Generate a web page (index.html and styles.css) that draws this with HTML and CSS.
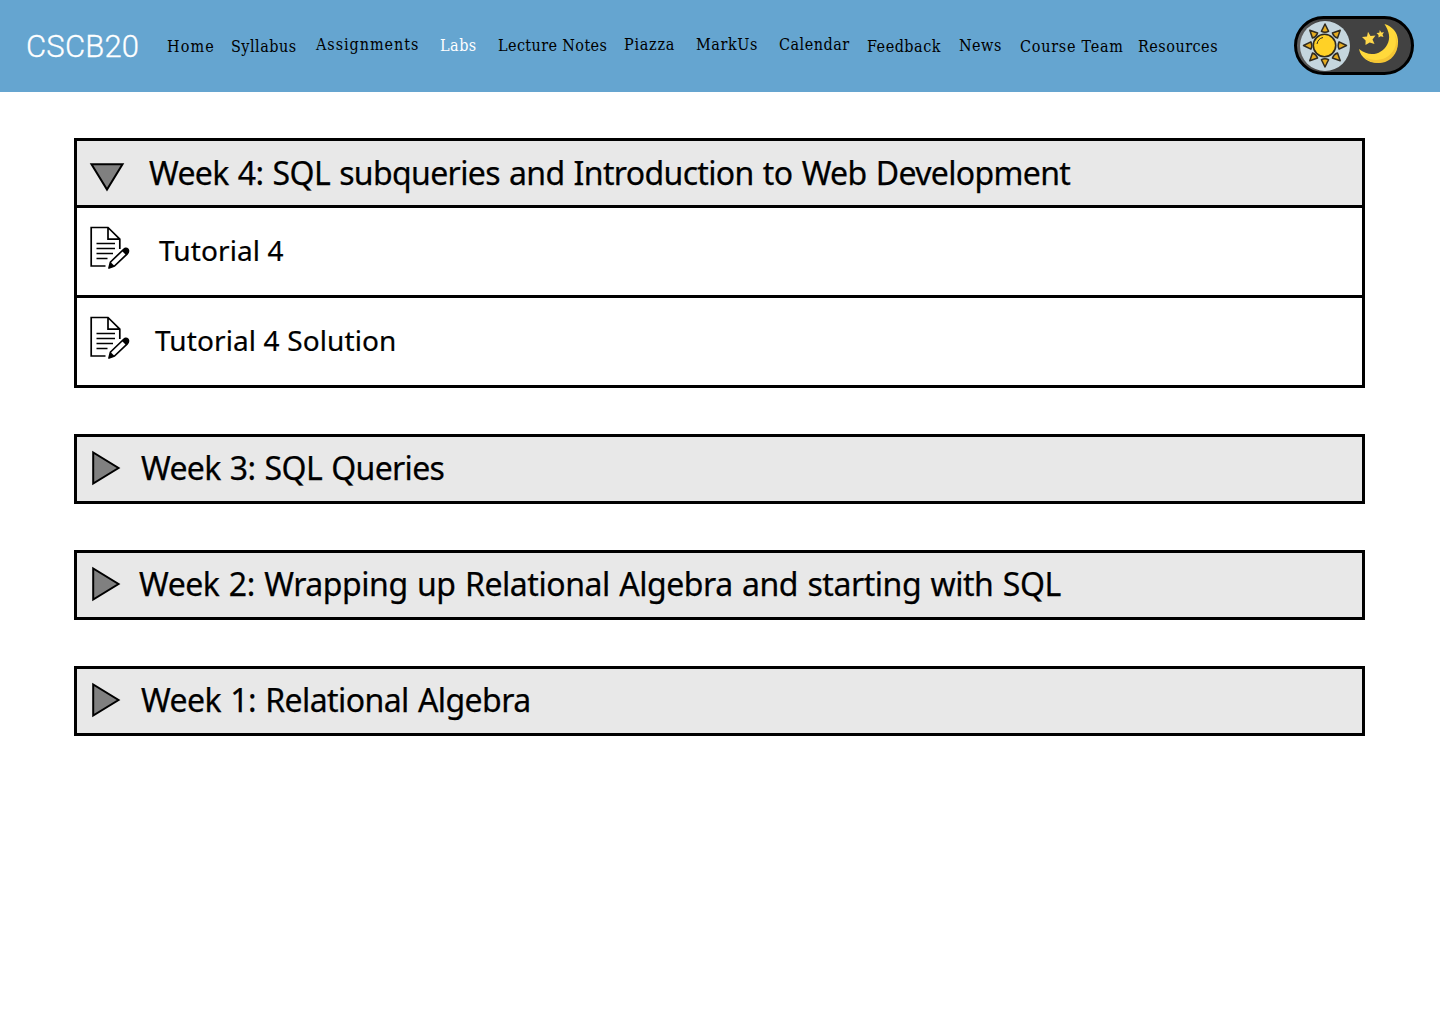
FILE: index.html
```html
<!DOCTYPE html>
<html lang="en">
<head>
<meta charset="utf-8">
<title>CSCB20 Labs</title>
<link rel="stylesheet" href="styles.css">
</head>
<body>
<svg width="0" height="0" class="defs" aria-hidden="true">
  <symbol id="note" viewBox="0 0 40 44">
    <path d="M15.500 40H1.200V1.500H18L29.800 13.200V23M18 1.500V13.200H29.800M6.500 17.500H25M6.500 22.500H25M6.500 27.500H23M6.500 32.500H17.500" fill="none" stroke="#000" stroke-width="1.700"/>
    <path d="M20.500 36L33.500 23.500Q36 21.200 38 23.300Q39.200 25.500 37.300 27.800L24.500 40L19 42Z" fill="#fff" stroke="#000" stroke-width="1.700" stroke-linejoin="round"/>
    <path d="M19 42L20.500 36L24.500 40ZM32 25L35.500 21.800L39 25L36 29Z" fill="#000"/>
  </symbol>
  <symbol id="right" viewBox="0 0 30 36"><path d="M2.200 2.500V33.500L27.500 18Z" fill="#808080" stroke="#000" stroke-width="2"/></symbol>
</svg>
<header class="bar">
  <div class="logo">CSCB20</div>
  <nav class="nav">
    <a class="low home">Home</a><a class="low syllabus">Syllabus</a><a class="assignments">Assignments</a><a class="mid labs">Labs</a><a class="mid lecture">Lecture Notes</a><a class="piazza">Piazza</a><a class="markus">MarkUs</a><a class="calendar">Calendar</a><a class="low feedback">Feedback</a><a class="mid news">News</a><a class="low team">Course Team</a><a class="low resources">Resources</a>
  </nav>
  <svg class="toggle" width="120" height="59" viewBox="0 0 120 59">
    <defs>
      <linearGradient id="track"><stop offset="0" stop-color="#666"/><stop offset=".2" stop-color="#424242"/></linearGradient>
      <path id="ray" d="M31 8L34.600 15.400Q31 17.200 27.400 15.400Z"/>
    </defs>
    <rect x="1.500" y="1.500" width="117" height="56" rx="28" fill="url(#track)" stroke="#000" stroke-width="3"/>
    <circle cx="31" cy="30" r="25" fill="#c5d6de"/>
    <g fill="#e5ab20" stroke="#302b20" stroke-width="1.500" stroke-linejoin="round">
      <use href="#ray"/><use href="#ray" transform="rotate(45 31 29.500)"/><use href="#ray" transform="rotate(90 31 29.500)"/><use href="#ray" transform="rotate(135 31 29.500)"/><use href="#ray" transform="rotate(180 31 29.500)"/><use href="#ray" transform="rotate(225 31 29.500)"/><use href="#ray" transform="rotate(270 31 29.500)"/><use href="#ray" transform="rotate(315 31 29.500)"/>
    </g>
    <circle cx="30.500" cy="29.500" r="11.200" fill="#ffd126" stroke="#302b20" stroke-width="1.600"/>
    <path d="M23 28Q24 22.500 29 21.500" fill="none" stroke="#302b20" stroke-width="1"/>
    <path d="M90.500 8C107 13 108 32 96 42C85 51 68 47 65 33C76 42 88 38 93 29C97 22 95 15 90.500 8Z" fill="#ffd93b"/>
    <path d="M100 17C108 34 90 51 70 41C83 53 101 46 103.500 31Q104 23 100 17Z" fill="#f4c534"/>
    <path d="M74 15.800L76.500 20L81.500 19.500L78.500 23.500L80.500 28L75.700 26.500L71.500 29L71.600 24.500L68 21L73 20.500ZM85.800 14L87.300 16.500L90 16.200L88.500 18.500L89.500 21L86.700 20.200L84.500 21.500L84.500 19L82.500 17L85.300 16.700Z" fill="#ffd84a"/>
  </svg>
</header>
<main class="weeks">
  <section class="week">
    <div class="head first"><svg class="arrow down" width="36" height="30" viewBox="0 0 36 30"><path d="M2.500 2.200H33.500L18 27.500Z" fill="#808080" stroke="#000" stroke-width="2"/></svg><h2 class="t4">Week 4: SQL subqueries and Introduction to Web Development</h2></div>
    <div class="item"><svg class="note" width="40" height="44"><use href="#note"/></svg><span class="tut">Tutorial 4</span></div>
    <div class="item"><svg class="note" width="40" height="44"><use href="#note"/></svg><span class="sol">Tutorial 4 Solution</span></div>
  </section>
  <section class="week"><div class="head"><svg class="arrow" width="30" height="36"><use href="#right"/></svg><h2 class="t3">Week 3: SQL Queries</h2></div></section>
  <section class="week"><div class="head"><svg class="arrow" width="30" height="36"><use href="#right"/></svg><h2 class="t2">Week 2: Wrapping up Relational Algebra and starting with SQL</h2></div></section>
  <section class="week"><div class="head"><svg class="arrow" width="30" height="36"><use href="#right"/></svg><h2 class="t1">Week 1: Relational Algebra</h2></div></section>
</main>
</body>
</html>
```
FILE: styles.css
```css
* { box-sizing: border-box; }
body { margin: 0; background: #fff; color: #000; }
.defs { display: none; }
.bar { display: flex; height: 92px; background: #65a5d0; padding: 16px 26px 0 26px; }
.logo { width: 141px; padding-top: 1px; font: 300 31px/60px Roboto, sans-serif; color: #fff; white-space: nowrap; letter-spacing: .2px; -webkit-text-stroke: .3px #fff; }
.nav { display: grid; grid-template-columns: 64px 85px 124px 58px 126px 72px 83px 88px 92px 61px 118px 82px; width: 1053px; padding-top: 19px; font: 16px/20px "DejaVu Serif Condensed", "DejaVu Serif", serif; font-stretch: condensed; white-space: nowrap; letter-spacing: .5px; }
.low { padding-top: 2px; }
.mid { padding-top: 1px; }
.home { letter-spacing: 1.1px; }
.assignments { letter-spacing: .95px; }
.labs { color: #fff; }
.lecture { letter-spacing: .4px; }
.piazza { letter-spacing: .75px; }
.markus { letter-spacing: .6px; }
.team { letter-spacing: .75px; }
.toggle { margin-left: auto; display: block; }
.weeks { display: flex; flex-direction: column; gap: 46px; padding: 46px 75px 0 74px; }
.week { border: 3px solid #000; }
.head { display: flex; height: 64px; background: #e8e8e8; padding: 13px 0 0 14px; }
.first { padding-left: 12px; }
.arrow { flex: none; display: block; }
.down { margin-top: 8px; }
h2 { margin: -4px 0 0 20px; font: 400 32px/44px "Noto Sans", sans-serif; white-space: nowrap; word-spacing: 1.5px; letter-spacing: -.65px; -webkit-text-stroke: .25px #000; }
.first h2 { margin: -3px 0 0 24px; }
.head .t2 { margin-left: 18px; letter-spacing: -.45px; }
.t1 { letter-spacing: -.58px; }
.item { display: flex; height: 90px; border-top: 3px solid #000; padding: 18px 0 0 13px; font: 28px/40px "Noto Sans", sans-serif; letter-spacing: .12px; white-space: nowrap; -webkit-text-stroke: .2px #000; }
.note { flex: none; display: block; }
.tut { margin: 4px 0 0 29px; }
.sol { margin: 4px 0 0 25px; }
```
